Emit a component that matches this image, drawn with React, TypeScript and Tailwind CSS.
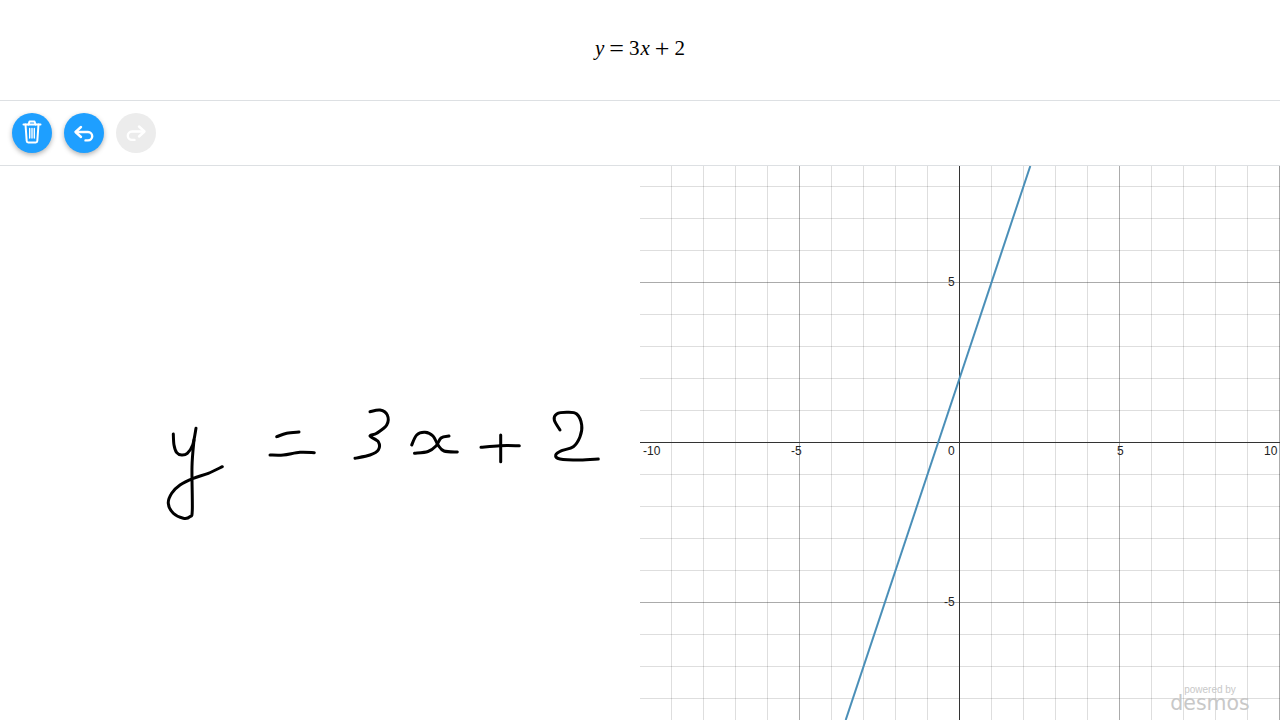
type Pt = [number, number];

// ink strokes in page coordinates
const strokes: Pt[][] = [
    [[173.3, 434], [174, 445], [176.7, 452.7], [181.7, 455], [187.3, 453.3], [192.7, 445], [196, 428.3]],
    [[194, 440], [192, 466.7], [192.3, 510], [190, 516.7], [183.3, 518.3], [173.3, 513.3], [168.3, 503.3], [171.7, 493.3], [180, 485], [193.3, 478.3], [208.3, 473.3], [222.3, 466.7]],
    [[276.7, 436.7], [286.7, 433.3], [299, 432]],
    [[270, 455], [283.3, 455], [300, 452.3], [314.3, 452.7]],
    [[370, 411.7], [380, 410], [387.3, 415], [386.7, 425], [376.7, 433.3], [370, 436], [378.3, 441.7], [378.3, 450], [370, 455], [355, 458.3]],
    [[411.7, 445], [416.7, 435], [425, 432.3], [433, 436], [438, 445], [444, 451], [457.3, 452]],
    [[414.5, 453.3], [428, 451.5], [436, 446], [441, 438], [449, 436]],
    [[481, 447.3], [500, 445.7], [519.3, 445.7]],
    [[500.7, 435], [500.7, 461.7]],
    [[560, 430], [554.3, 420], [556.7, 414], [566.7, 412.3], [576.7, 414], [581.7, 425], [580, 436.7], [573.3, 446.7], [561.7, 450.7], [555.7, 455], [560, 459], [580, 460], [598.3, 459]],
];

function toPath(pts: Pt[]) {
    let d = `M${pts[0][0]} ${pts[0][1]}`;
    for (let i = 0; i < pts.length - 1; i++) {
        const p0 = pts[Math.max(i - 1, 0)];
        const p1 = pts[i];
        const p2 = pts[i + 1];
        const p3 = pts[Math.min(i + 2, pts.length - 1)];
        const c1x = p1[0] + (p2[0] - p0[0]) / 6;
        const c1y = p1[1] + (p2[1] - p0[1]) / 6;
        const c2x = p2[0] - (p3[0] - p1[0]) / 6;
        const c2y = p2[1] - (p3[1] - p1[1]) / 6;
        d += ` C${c1x} ${c1y} ${c2x} ${c2y} ${p2[0]} ${p2[1]}`;
    }
    return d;
}

const UNITS = Array.from({ length: 21 }, (_, i) => i - 10);
const OX = 319.5; // graph origin inside the panel
const OY = 276.5;
const SCALE = 32;

function TrashIcon() {
    return (
        <svg width="32" height="32" viewBox="0 0 32 32" fill="none" stroke="currentColor" strokeWidth="2" strokeLinecap="round" strokeLinejoin="round">
            <path d="M7.5 7.5h17" />
            <path d="M12.5 7.5l1-3h5l1 3" />
            <path d="M9.5 7.5l1.2 16.5a1.5 1.5 0 0 0 1.5 1.4h7.6a1.5 1.5 0 0 0 1.5-1.4l1.2-16.5" />
            <path d="M13.7 11.5v9.5M16 11.5v9.5M18.3 11.5v9.5" strokeWidth="1.4" />
        </svg>
    );
}

function UndoIcon() {
    return (
        <svg width="32" height="32" viewBox="0 0 32 32" fill="none" stroke="currentColor" strokeWidth="2.4" strokeLinecap="round" strokeLinejoin="round">
            <path d="M13 10l-5.5 5l5.5 5" />
            <path d="M8 15h12a4.2 4.2 0 0 1 0 8.4h-2.5" />
        </svg>
    );
}

function RedoIcon() {
    return (
        <svg width="32" height="32" viewBox="0 0 32 32" fill="none" stroke="currentColor" strokeWidth="2.4" strokeLinecap="round" strokeLinejoin="round">
            <path d="M19 9.5l5.5 5l-5.5 5" />
            <path d="M24 14.5h-12a4.2 4.2 0 0 0 0 8.4h2.5" />
        </svg>
    );
}

function Graph() {
    return (
        <svg width="640" height="554" viewBox="0 0 640 554" className="block">
            {UNITS.filter((k) => k % 5 !== 0).map((k) => (
                <g key={k} stroke="#000" strokeOpacity="0.13" strokeWidth="1">
                    <line x1={OX + k * SCALE} y1="0" x2={OX + k * SCALE} y2="554" />
                    <line x1="0" y1={OY + k * SCALE} x2="640" y2={OY + k * SCALE} />
                </g>
            ))}
            {[-10, -5, 5, 10].map((k) => (
                <g key={k} stroke="#000" strokeOpacity="0.33" strokeWidth="1">
                    <line x1={OX + k * SCALE} y1="0" x2={OX + k * SCALE} y2="554" />
                    <line x1="0" y1={OY + k * SCALE} x2="640" y2={OY + k * SCALE} />
                </g>
            ))}
            <line x1={OX} y1="0" x2={OX} y2="554" stroke="#333" strokeWidth="1" />
            <line x1="0" y1={OY} x2="640" y2={OY} stroke="#333" strokeWidth="1" />
            <line x1="390.3" y1="0" x2="205.7" y2="554" stroke="#4a8fb8" strokeWidth="2" />
            <g fontFamily="'Liberation Sans', Arial, sans-serif" fontSize="12" fill="#222">
                <text x="3" y="289">-10</text>
                <text x="151" y="289">-5</text>
                <text x="308" y="289">0</text>
                <text x="477" y="289">5</text>
                <text x="624" y="289">10</text>
                <text x="308" y="120">5</text>
                <text x="304" y="440">-5</text>
            </g>
        </svg>
    );
}

export default function App() {
    return (
        <div className="flex h-screen flex-col overflow-hidden bg-white">
            <header className="flex h-[101px] shrink-0 items-center justify-center border-b border-[#dde0e3] pb-[2px] text-[21px] text-black [font-family:'Liberation_Serif',serif]">
                <i>y</i>
                <span className="mx-[5px] text-[26px] leading-none">=</span>
                <span>3</span>
                <i className="ml-[1px]">x</i>
                <span className="mx-[5px] text-[26px] leading-none">+</span>
                <span>2</span>
            </header>

            <div className="flex h-[65px] shrink-0 items-center gap-3 border-b border-[#dde0e3] px-3 pb-[1px]">
                <button className="flex h-10 w-10 items-center justify-center rounded-full bg-[#1e9fff] text-white shadow-[0_2px_5px_rgba(0,0,0,0.3)]">
                    <TrashIcon />
                </button>
                <button className="flex h-10 w-10 items-center justify-center rounded-full bg-[#1e9fff] text-white shadow-[0_2px_5px_rgba(0,0,0,0.3)]">
                    <UndoIcon />
                </button>
                <button disabled className="flex h-10 w-10 items-center justify-center rounded-full bg-[#ececec] text-white">
                    <RedoIcon />
                </button>
            </div>

            <main className="flex min-h-0 flex-1">
                <div className="w-1/2 overflow-hidden">
                    <svg width="640" height="554" viewBox="0 166 640 554" className="block">
                        {strokes.map((s, i) => (
                            <path key={i} d={toPath(s)} fill="none" stroke="#000" strokeWidth="3" strokeLinecap="round" strokeLinejoin="round" />
                        ))}
                    </svg>
                </div>
                <div className="relative w-1/2 overflow-hidden">
                    <Graph />
                    <div className="absolute bottom-[8px] right-[30px] flex w-[80px] flex-col items-center text-[#c8c8c8]">
                        <span className="h-[11px] text-[10px] leading-[11px] [font-family:'Liberation_Sans',sans-serif]">powered by</span>
                        <span className="h-[17px] text-[20.5px] leading-[17px] [font-family:'DejaVu_Sans',sans-serif]">desmos</span>
                    </div>
                </div>
            </main>
        </div>
    );
}
